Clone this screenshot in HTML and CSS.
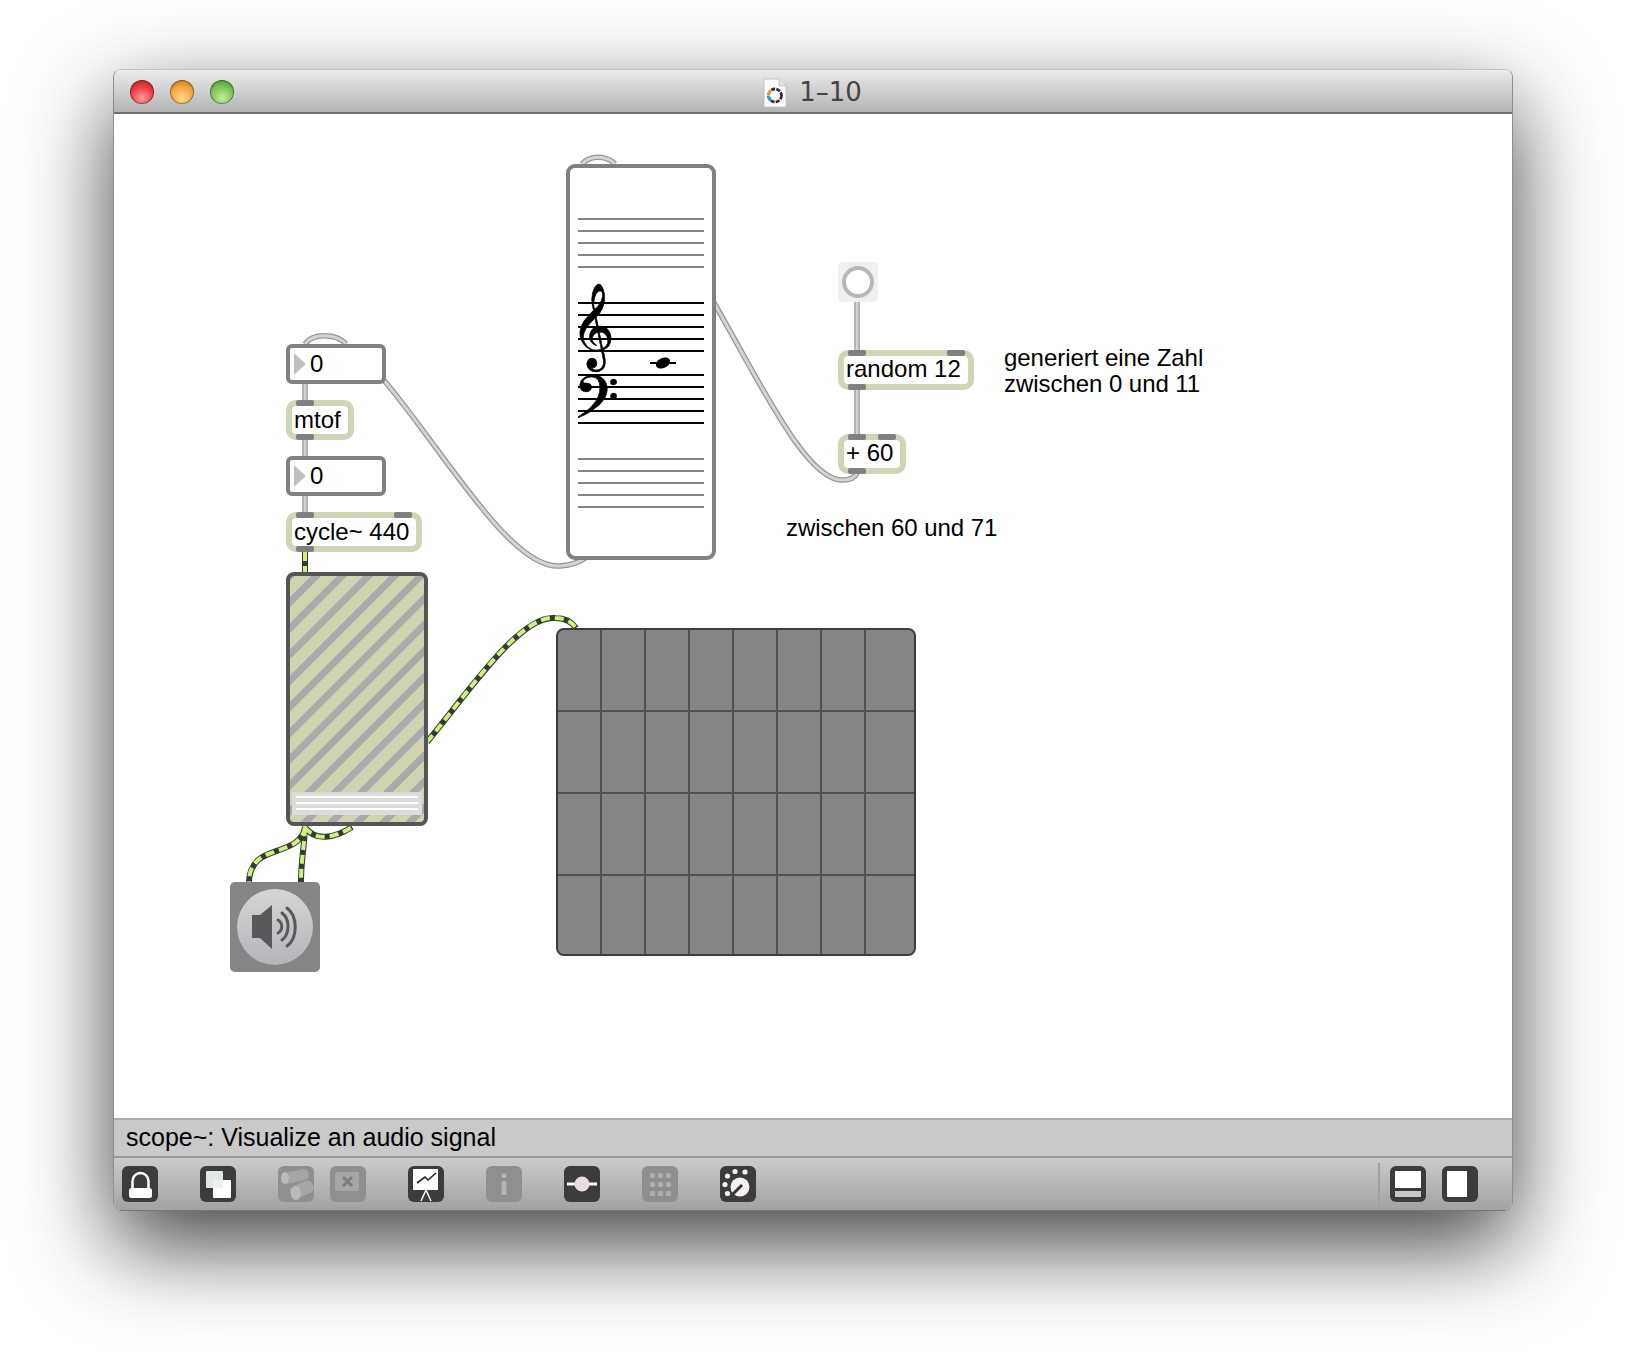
FILE: index.html
```html
<!DOCTYPE html>
<html lang="en">
<head>
  <meta charset="UTF-8">
  <title>1-10</title>
  <link rel="stylesheet" href="styles.css">
</head>
<body>

  <div class="window">

    <div class="titlebar">
      <div class="lights">
        <div class="light red"></div>
        <div class="light orange"></div>
        <div class="light green"></div>
      </div>
      <svg class="doc-icon" width="24" height="30" viewBox="0 0 24 30">
        <path d="M1 1H16L23 8V29H1Z" fill="#fbfbfb" stroke="#c4c4c4"/>
        <path d="M16 1V8H23" fill="#e4e4e4" stroke="#c4c4c4"/>
        <circle cx="12" cy="17.5" r="6.5" fill="none" stroke="#333" stroke-width="2.8" stroke-dasharray="4 1.2"/>
        <path d="M8 12.5A6.5 6.5 0 0 0 5.5 16.5" fill="none" stroke="#e8a020" stroke-width="2.8"/>
        <path d="M5.5 18A6.5 6.5 0 0 0 8 22.7" fill="none" stroke="#2a9fd0" stroke-width="2.8"/>
      </svg>
      <span class="title">1–10</span>
    </div>

    <div class="patcher">
      <!-- patch cords, coordinates are page pixels -->
      <svg class="cords" viewBox="114 113 1398 1006">
        <g class="cord">
          <path d="M305 383V400M305 439V456M305 495V512"/>
          <path d="M857 302V350M857 389V434"/>
          <path d="M305 344C312 333 336 333 346 344"/>
          <path d="M582 164C590 155 606 155 615 164"/>
          <path d="M382 378C440 445 510 570 560 566C572 565 580 562 585 558"/>
          <path d="M710 296C755 372 805 482 843 480C850 480 855 477 857 473"/>
        </g>
        <g class="cord-in">
          <path d="M305 383V400M305 439V456M305 495V512"/>
          <path d="M857 302V350M857 389V434"/>
          <path d="M305 344C312 333 336 333 346 344"/>
          <path d="M582 164C590 155 606 155 615 164"/>
          <path d="M382 378C440 445 510 570 560 566C572 565 580 562 585 558"/>
          <path d="M710 296C755 372 805 482 843 480C850 480 855 477 857 473"/>
        </g>
        <g class="signal">
          <path d="M305 552V573"/>
          <path d="M427 742C470 690 520 615 555 618C565 618 572 622 576 628"/>
          <path d="M305 827C302 850 272 848 258 860C252 866 249 872 249 882"/>
          <path d="M305 827C304 850 301 860 301 882"/>
          <path d="M305 827C315 842 335 838 352 827"/>
        </g>
        <g class="signal-in">
          <path d="M305 552V573"/>
          <path d="M427 742C470 690 520 615 555 618C565 618 572 622 576 628"/>
          <path d="M305 827C302 850 272 848 258 860C252 866 249 872 249 882"/>
          <path d="M305 827C304 850 301 860 301 882"/>
          <path d="M305 827C315 842 335 838 352 827"/>
        </g>
      </svg>

      <div class="numbox num-a"><div class="tri"></div>0</div>
      <div class="obj mtof"><div class="port in1"></div>mtof<div class="port out1"></div></div>
      <div class="numbox num-b"><div class="tri"></div>0</div>
      <div class="obj cycle"><div class="port in1"></div><div class="port in2"></div>cycle~ 440<div class="port out1"></div></div>

      <div class="score">
        <div class="staff grey"><div></div><div></div><div></div><div></div><div></div></div>
        <div class="staff upper"><div></div><div></div><div></div><div></div><div></div></div>
        <div class="staff lower"><div></div><div></div><div></div><div></div><div></div></div>
        <div class="staff grey last"><div></div><div></div><div></div><div></div><div></div></div>
        <span class="clef treble">&#x1D11E;</span>
        <span class="clef bass">&#x1D122;</span>
        <svg class="note" width="28" height="14" viewBox="0 0 28 14">
          <path d="M1 7H27" stroke="#000" stroke-width="2"/>
          <ellipse cx="14" cy="7" rx="7.5" ry="5" fill="#000" transform="rotate(-25 14 7)"/>
        </svg>
      </div>

      <div class="bang"><div class="bang-ring"></div></div>
      <div class="obj random"><div class="port in1"></div><div class="port in2"></div>random 12<div class="port out1"></div></div>
      <div class="obj plus"><div class="port in1"></div><div class="port in2"></div>+ 60<div class="port out1"></div></div>

      <div class="comment c-range">generiert eine Zahl<br>zwischen 0 und 11</div>
      <div class="comment c-result">zwischen 60 und 71</div>

      <div class="scope">
        <div class="scope-bar"><div></div><div></div><div></div></div>
      </div>

      <div class="matrix">
        <div></div><div></div><div></div><div></div><div></div><div></div><div></div><div></div>
        <div></div><div></div><div></div><div></div><div></div><div></div><div></div><div></div>
        <div></div><div></div><div></div><div></div><div></div><div></div><div></div><div></div>
        <div></div><div></div><div></div><div></div><div></div><div></div><div></div><div></div>
      </div>

      <div class="dac">
        <div class="dac-disc">
          <svg width="76" height="76" viewBox="0 0 76 76">
            <path d="M15 26H23L35 16V60L23 49H15Z" fill="#58595b"/>
            <g fill="none" stroke="#58595b" stroke-width="3" stroke-linecap="round">
              <path d="M41 31C46 34 46 41 41 44"/>
              <path d="M45 24C53 30 53 45 45 51"/>
              <path d="M50 19C61 27 61 49 50 57"/>
            </g>
          </svg>
        </div>
      </div>
    </div>

    <div class="status">scope~: Visualize an audio signal</div>

    <div class="toolbar">
      <div class="tool">
        <svg viewBox="0 0 36 36"><path d="M10.5 22V15A8 8 0 0 1 26.5 15V22" fill="none" stroke="#fff" stroke-width="2.5"/><rect x="7" y="22" width="23" height="10" rx="2.5" fill="#fff"/></svg>
      </div>
      <div class="tool gap">
        <svg viewBox="0 0 36 36"><rect x="6" y="5" width="17" height="17" rx="1" fill="#e1e7e7"/><rect x="13" y="14" width="18" height="18" rx="1" fill="#fff"/><rect x="13" y="14" width="10" height="8" fill="#eef1f1"/></svg>
      </div>
      <div class="tool off gap">
        <svg viewBox="0 0 36 36"><g fill="#a6a6a6"><rect x="3" y="5" width="28" height="11" rx="5" transform="rotate(-12 17 10)"/><rect x="12" y="17" width="24" height="13" rx="5" transform="rotate(-24 24 24)"/></g><g fill="#bababa"><ellipse cx="7" cy="12" rx="4" ry="6"/><ellipse cx="18" cy="27" rx="5" ry="7"/></g></svg>
      </div>
      <div class="tool off">
        <svg viewBox="0 0 36 36"><rect x="5" y="6" width="24" height="19" rx="2" fill="#a6a6a6"/><path d="M13 11L22 20M22 11L13 20" stroke="#7c7c7c" stroke-width="3"/></svg>
      </div>
      <div class="tool gap">
        <svg viewBox="0 0 36 36"><rect x="5" y="3" width="25" height="21" fill="#fff"/><path d="M9 17L17 11L20 14L28 7" fill="none" stroke="#222" stroke-width="1.6"/><path d="M18 24L13 35M18 24L23 35" stroke="#fff" stroke-width="1.5"/></svg>
      </div>
      <div class="tool off gap">
        <svg viewBox="0 0 36 36"><g fill="#b4b4b4"><rect x="15.5" y="7" width="5" height="5" rx="2"/><rect x="15.5" y="15" width="5" height="14" rx="1"/></g></svg>
      </div>
      <div class="tool gap">
        <svg viewBox="0 0 36 36"><path d="M3 18H33" stroke="#fff" stroke-width="3"/><circle cx="18" cy="18" r="7.5" fill="#e6dfe0"/></svg>
      </div>
      <div class="tool off gap">
        <svg viewBox="0 0 36 36"><g fill="#b0b0b0"><rect x="8" y="7" width="5" height="5" rx="1.5"/><rect x="16" y="7" width="5" height="5" rx="1.5"/><rect x="24" y="7" width="5" height="5" rx="1.5"/><rect x="8" y="16" width="5" height="5" rx="1.5"/><rect x="16" y="16" width="5" height="5" rx="1.5"/><rect x="24" y="16" width="5" height="5" rx="1.5"/><rect x="8" y="25" width="5" height="5" rx="1.5"/><rect x="16" y="25" width="5" height="5" rx="1.5"/><rect x="24" y="25" width="5" height="5" rx="1.5"/></g></svg>
      </div>
      <div class="tool gap">
        <svg viewBox="0 0 36 36"><circle cx="20" cy="21" r="9.5" fill="#f4f0f0"/><path d="M13 28L22 19" stroke="#333" stroke-width="3"/><g fill="#f4f0f0"><circle cx="7.5" cy="10" r="2.6"/><circle cx="15" cy="5.5" r="2.6"/><circle cx="25" cy="6" r="2.6"/><circle cx="5" cy="18.5" r="2.6"/><circle cx="7.5" cy="27.5" r="2.6"/></g></svg>
      </div>

      <div class="tool-sep"></div>
      <div class="tool">
        <svg viewBox="0 0 36 36"><rect x="5" y="5" width="26" height="17" fill="#fff"/><rect x="5" y="25" width="26" height="6" fill="#c8c8c8"/></svg>
      </div>
      <div class="tool last">
        <svg viewBox="0 0 36 36"><rect x="5" y="5" width="20" height="26" fill="#fff"/></svg>
      </div>
    </div>

  </div>

</body>
</html>
```

FILE: styles.css
```css
html {
  background: #fff;
}

body {
  box-sizing: border-box;
  min-height: 1368px;
  margin: 0;
  padding: 69px 0 0 113px;
  background: #fff;
  font-family: 'Liberation Sans', Arial, sans-serif;
  color: #000;
}

/* Window */
.window {
  display: flex;
  flex-direction: column;
  box-sizing: border-box;
  width: 1400px;
  height: 1142px;
  border: 1px solid #8d8d8d;
  border-top-color: #c4c4c4;
  border-bottom-color: #777;
  border-radius: 8px;
  box-shadow: 0 34px 90px rgba(0, 0, 0, 0.75);
  overflow: hidden;
}

.titlebar {
  position: relative;
  z-index: 1;
  display: flex;
  align-items: center;
  justify-content: center;
  flex: none;
  height: 42px;
  margin-bottom: -1px;
  background: linear-gradient(#ebebeb, #b4b4b4);
  border-bottom: 2px solid #707070;
}

.lights {
  position: absolute;
  left: 16px;
  top: 10px;
  display: flex;
  gap: 16px;
}

.light {
  width: 24px;
  height: 24px;
  border-radius: 50%;
  box-shadow: inset 0 0 0 1px rgba(0, 0, 0, 0.35);
}

.red { background: radial-gradient(circle at 50% 75%, #ff9a9a, #e53a3f 55%, #a81a20); }
.orange { background: radial-gradient(circle at 50% 75%, #ffd890, #f0a33a 55%, #a86a10); }
.green { background: radial-gradient(circle at 50% 75%, #c5eda0, #78c050 55%, #3f8424); }

.doc-icon {
  margin: 3px 12px 0 0;
}

.title {
  font-family: 'DejaVu Sans', sans-serif;
  font-size: 26px;
  color: #444;
  margin: 2px 1px 0 0;
}

/* Patcher canvas, nodes sit on it by coordinates */
.patcher {
  position: relative;
  flex: 1;
  background: #fff;
}

.cords {
  position: absolute;
  left: 0;
  top: 0;
  width: 1398px;
  height: 1006px;
}

.cords path {
  fill: none;
}

.cord path { stroke: #969696; stroke-width: 5.5; }
.cord-in path { stroke: #d4d4d4; stroke-width: 3; }
.signal path { stroke: #333d2e; stroke-width: 6; }
.signal-in path { stroke: #cdf080; stroke-width: 4; stroke-dasharray: 9 5; }

.obj, .numbox {
  position: absolute;
  box-sizing: border-box;
  height: 40px;
  background: #fff;
  font-size: 24px;
  line-height: 26px;
  white-space: nowrap;
}

.obj {
  border: 6px solid #cfd6b8;
  border-radius: 10px;
  padding-left: 2px;
}

.numbox {
  width: 100px;
  border: 4px solid #808080;
  border-radius: 6px;
  padding: 3px 0 0 20px;
}

.tri {
  position: absolute;
  left: 4px;
  top: 5px;
  border-left: 12px solid #c0c0c0;
  border-top: 11px solid transparent;
  border-bottom: 11px solid transparent;
}

.port {
  position: absolute;
  width: 18px;
  height: 6px;
  background: #808080;
  border-radius: 2px;
}

.in1 { left: 4px; top: -6px; }
.out1 { left: 4px; bottom: -6px; }

.num-a { left: 172px; top: 231px; }
.num-b { left: 172px; top: 343px; }
.mtof { left: 172px; top: 287px; width: 68px; padding-top: 1px; }
.cycle { left: 172px; top: 399px; width: 136px; padding-top: 1px; }
.cycle .in2 { left: 102px; top: -6px; }
.random { left: 724px; top: 237px; width: 136px; }
.random .in2 { left: 103px; top: -6px; }
.plus { left: 724px; top: 321px; width: 68px; }
.plus .in2 { left: 34px; top: -6px; }

/* Staff display */
.score {
  position: absolute;
  left: 452px;
  top: 51px;
  box-sizing: border-box;
  width: 150px;
  height: 396px;
  padding: 50px 8px 0;
  background: #fff;
  border: 4px solid #808080;
  border-radius: 9px;
}

.staff {
  display: flex;
  flex-direction: column;
  gap: 10px;
  margin-bottom: 22px;
}

.staff div {
  height: 2px;
  background: #000;
}

.staff.grey { margin-bottom: 34px; }
.staff.grey div { background: #858585; }
.staff.upper { margin-bottom: 22px; }
.staff.lower { margin-bottom: 34px; }

.clef {
  position: absolute;
  font-family: 'DejaVu Sans', 'Noto Sans', sans-serif;
  line-height: 1;
  -webkit-text-stroke: 0.6px #000;
}

.treble { left: 1px; top: 119px; font-size: 74px; }
.bass { left: 3px; top: 201px; font-size: 72px; }

.note {
  position: absolute;
  left: 79px;
  top: 188px;
}

.bang {
  position: absolute;
  left: 724px;
  top: 149px;
  display: flex;
  align-items: center;
  justify-content: center;
  width: 40px;
  height: 40px;
  background: #f0f0f0;
  border-radius: 5px;
}

.bang-ring {
  width: 24px;
  height: 24px;
  background: #fff;
  border: 4px solid #b8b8b8;
  border-radius: 50%;
}

.comment {
  position: absolute;
  font-size: 24px;
  line-height: 26px;
  letter-spacing: -0.05px;
  white-space: nowrap;
}

.c-range { left: 890px; top: 232px; }
.c-result { left: 672px; top: 402px; }

/* Scope */
.scope {
  position: absolute;
  left: 172px;
  top: 459px;
  display: flex;
  align-items: flex-end;
  box-sizing: border-box;
  width: 142px;
  height: 254px;
  padding: 0 2px 7px;
  border: 4px solid #555;
  border-radius: 8px;
  background: repeating-linear-gradient(-45deg, #cfd3b0 0, #cfd3b0 5.8px, #aaaaaa 6.8px, #aaaaaa 12.8px, #cfd3b0 13.8px, #cfd3b0 18.5px);
}

.scope-bar {
  display: flex;
  flex-direction: column;
  gap: 4px;
  width: 100%;
  padding: 4px 4px 5px;
  background: #dcdcdc;
}

.scope-bar div {
  height: 2px;
  background: #fff;
}

/* Matrix of toggles */
.matrix {
  position: absolute;
  left: 442px;
  top: 515px;
  display: grid;
  grid-template-columns: repeat(7, 42px) 1fr;
  grid-template-rows: repeat(3, 80px) 1fr;
  gap: 2px;
  box-sizing: border-box;
  width: 360px;
  height: 328px;
  border: 2px solid #3c3c3c;
  border-radius: 8px;
  background: #505050;
  overflow: hidden;
}

.matrix div {
  background: #858585;
}

/* Speaker */
.dac {
  position: absolute;
  left: 116px;
  top: 769px;
  display: flex;
  align-items: center;
  justify-content: center;
  width: 90px;
  height: 90px;
  background: #858585;
  border-radius: 5px;
}

.dac-disc {
  width: 76px;
  height: 76px;
  border-radius: 50%;
  background: linear-gradient(#d6d6d6, #b4b4ba);
}

/* Bottom bars */
.status {
  flex: none;
  box-sizing: border-box;
  height: 40px;
  padding: 3px 0 0 12px;
  background: #c9c9c9;
  border-top: 2px solid #a9a9a9;
  border-bottom: 2px solid #9c9c9c;
  font-size: 25px;
  line-height: 29px;
}

.toolbar {
  display: flex;
  align-items: center;
  flex: none;
  height: 52px;
  padding: 0 0 0 8px;
  background: linear-gradient(#cbcbcb, #a2a2a2);
}

.tool {
  flex: none;
  width: 36px;
  height: 36px;
  background: #3c3c3c;
  border-radius: 6px;
}

.tool svg {
  display: block;
  width: 36px;
  height: 36px;
}

.tool.off {
  background: #8f8f8f;
  margin-left: 16px;
}

.tool.gap { margin-left: 42px; }
.tool.last { margin-left: 16px; }

.tool-sep {
  width: 2px;
  height: 42px;
  margin: 0 10px 0 auto;
  background: #a0a0a0;
}

.tool.last {
  margin-right: 34px;
}
```
